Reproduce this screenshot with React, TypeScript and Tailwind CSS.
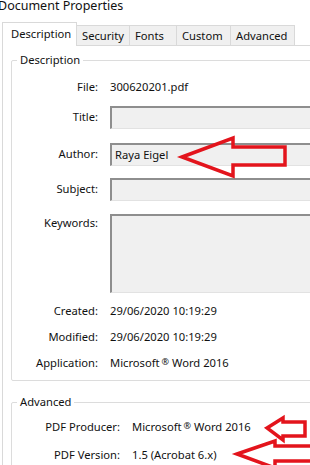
import type { ReactNode } from 'react';

const tabs = [
  { label: 'Security', w: 'w-[53px]' },
  { label: 'Fonts', w: 'w-[47px]' },
  { label: 'Custom', w: 'w-[54px]' },
  { label: 'Advanced', w: 'w-[64px]' },
];

function Label({ children, className = '' }: { children: ReactNode; className?: string }) {
  return <div className={`shrink-0 text-right ${className}`}>{children}</div>;
}

function TextRow({ label, value, h = 'h-[18px]' }: { label: string; value: ReactNode; h?: string }) {
  return (
    <div className={`flex items-center ${h}`}>
      <Label className="w-[86px]">{label}</Label>
      <div className="ml-[12px] whitespace-nowrap">{value}</div>
    </div>
  );
}

function InputRow({
  label,
  value,
  h = 'h-[23px]',
  top = false,
  className = '',
}: {
  label: string;
  value?: string;
  h?: string;
  top?: boolean;
  className?: string;
}) {
  return (
    <div className={`flex ${top ? 'items-start' : 'items-center'} ${className}`}>
      <Label className={`w-[86px] ${top ? 'pt-[1px]' : ''}`}>{label}</Label>
      <div
        className={`ml-[12px] flex-1 ${h} bg-[#f0f0f0] border-t-2 border-l-2 border-b border-t-[#8e8e8e] border-l-[#8e8e8e] border-b-[#e2e2e2] pl-[3px] flex items-center`}
      >
        {value}
      </div>
    </div>
  );
}

const Word = () => (
  <span>
    Microsoft<span className="text-[9px] align-[2px] ml-[2px]">®</span> Word 2016
  </span>
);

export default function App() {
  return (
    <div
      className="relative h-[465px] w-[310px] overflow-hidden bg-white text-[11.2px] text-[#111]"
      style={{ fontFamily: '"Segoe UI", "Noto Sans", sans-serif' }}
    >
      {/* Window title */}
      <div className="h-[23px] -ml-[2px] -mt-[2px] text-[12.5px] leading-[16px]">Document Properties</div>

      {/* Tabs */}
      <div className="flex items-end h-[24px] pl-[2px]">
        <div className="w-[75px] h-[24px] border border-b-0 border-[#d9d9d9] bg-white pl-[8px] pt-[3px] relative z-10 -mb-px">
          Description
        </div>
        {tabs.map((t) => (
          <div
            key={t.label}
            className={`${t.w} h-[20px] border border-l-0 border-b-0 border-[#d9d9d9] bg-[#f0f0f0] pl-[5px] leading-[19px]`}
          >
            {t.label}
          </div>
        ))}
      </div>

      {/* Tab page */}
      <div className="ml-[2px] w-[340px] border-l border-t border-[#d9d9d9] pl-[8px] pt-[7px] pb-[20px]">
        <fieldset className="w-[330px] border border-[#dcdcdc] rounded-[2px] pb-[8px]">
          <legend className="ml-[5px] px-[3px] leading-[14px]">Description</legend>
          <div className="pt-[11px]">
            <TextRow label="File:" value="300620201.pdf" />
            <InputRow label="Title:" className="mt-[10px]" />
            <InputRow label="Author:" value="Raya Eigel" className="mt-[14px]" />
            <InputRow label="Subject:" className="mt-[12px]" />
            <InputRow label="Keywords:" h="h-[79px]" top className="mt-[13px]" />
            <div className="mt-[9px]">
              <TextRow label="Created:" value="29/06/2020 10:19:29" />
              <TextRow label="Modified:" value="29/06/2020 10:19:29" h="h-[26px] pt-[8px]" />
              <TextRow label="Application:" value={<Word />} h="h-[26px] pt-[8px]" />
            </div>
          </div>
        </fieldset>

        <fieldset className="mt-[14px] w-[330px] border border-[#dcdcdc] rounded-[2px] pb-[10px]">
          <legend className="ml-[5px] px-[3px] leading-[14px]">Advanced</legend>
          <div className="pt-[9px]">
            <div className="flex items-center h-[18px]">
              <Label className="w-[108px]">PDF Producer:</Label>
              <div className="ml-[12px] whitespace-nowrap">
                <Word />
              </div>
            </div>
            <div className="flex items-center h-[18px] mt-[10px]">
              <Label className="w-[108px]">PDF Version:</Label>
              <div className="ml-[12px] whitespace-nowrap">1.5 (Acrobat 6.x)</div>
            </div>
          </div>
        </fieldset>
      </div>

      {/* Red annotation arrows */}
      <svg className="absolute inset-0 pointer-events-none" width="310" height="465" viewBox="0 0 310 465">
        <g fill="none" stroke="#e3141c" strokeWidth="3.5" strokeLinejoin="miter">
          <path d="M182 157 L233 138 L233 147 L285 147 L285 165 L233 165 L233 176 Z" />
          <path d="M267 428 L283 418 L283 422 L305 422 L305 436 L283 436 L283 440 Z" />
          <path d="M237 454 L275 441 L275 446 L318 446 L318 461 L275 461 L275 468 Z" />
        </g>
      </svg>
    </div>
  );
}
